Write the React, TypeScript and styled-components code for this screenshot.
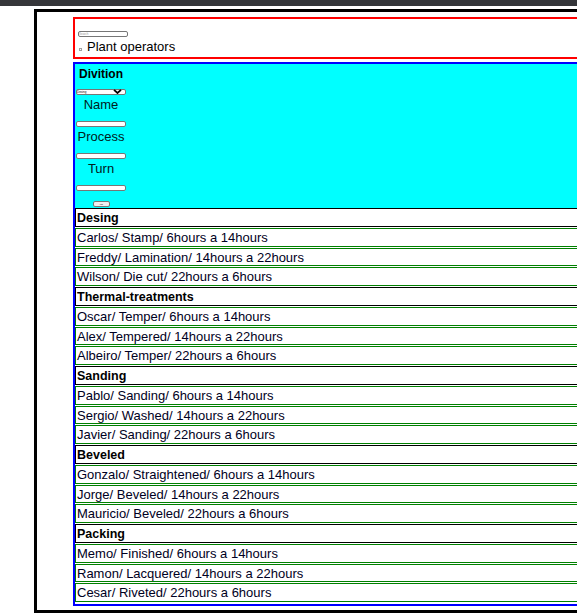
import React from "react";
import styled, { createGlobalStyle } from "styled-components";

const Global = createGlobalStyle`
  html, body {
    margin: 0;
    padding: 0;
    overflow: hidden;
    background: #ffffff;
    font-family: "Comic Sans MS", "Liberation Sans", Arial, sans-serif;
    color: #000;
  }
`;

const TopBar = styled.div`
  height: 6px;
  background: #35363a;
`;

const Frame = styled.div`
  margin: 3px 0 0 34px;
  width: 900px;
  border: 3px solid #000;
  padding: 5px 0 4px 36px;
`;

const Header = styled.div`
  border: 2px solid #ff0000;
  box-sizing: border-box;
  height: 42px;
  padding: 12px 0 0 3px;
  margin-bottom: 3px;
`;

const TinyInput = styled.input`
  display: block;
  box-sizing: border-box;
  width: 50px;
  height: 6px;
  padding: 0;
  margin: 0;
  border: 1px solid #767676;
  border-radius: 2px;
  background: #fff;
  font-size: 3px;
  outline: none;
  &::placeholder {
    color: #999;
  }
`;

const Title = styled.div`
  font-size: 13px;
  line-height: 17px;
  padding-top: 1px;
  display: flex;
  align-items: center;
`;

const Check = styled.span`
  display: inline-block;
  width: 3px;
  height: 3px;
  border: 1px solid #a0a0a0;
  box-sizing: border-box;
  margin: 5px 5px 0 1px;
`;

const Panel = styled.div`
  border: 2px solid #0000ff;
  background: #00ffff;
`;

const Form = styled.form`
  width: 50px;
  margin-left: 1px;
  display: flex;
  flex-direction: column;
  align-items: center;
  padding-bottom: 1px;
`;

const FormTitle = styled.div`
  font-weight: bold;
  font-size: 12px;
  line-height: 18px;
  padding-top: 1px;
  margin-bottom: 6px;
  white-space: nowrap;
`;

const SelectWrap = styled.div`
  position: relative;
  width: 50px;
  height: 6px;
`;

const TinySelect = styled.select`
  appearance: none;
  display: block;
  box-sizing: border-box;
  width: 50px;
  height: 6px;
  padding: 0;
  margin: 0;
  border: 1px solid #767676;
  border-radius: 2px;
  background: #fff;
  font-size: 3px;
`;

const Chevron = styled.svg`
  position: absolute;
  right: 4px;
  top: 0;
  pointer-events: none;
`;

const Label = styled.label`
  font-size: 13px;
  line-height: 18px;
  padding-top: 1px;
  margin-bottom: 7px;
  white-space: nowrap;
  color: #00201c;
`;

const Gap = styled.div`
  height: 10px;
`;

const TinyButton = styled.button`
  box-sizing: border-box;
  width: 17px;
  height: 6px;
  padding: 0;
  border: 1px solid #767676;
  border-radius: 2px;
  background: #efefef;
  font-size: 2px;
`;

const List = styled.div`
  background: #fff;
  padding-bottom: 1px;
`;

const Row = styled.div<{ $head?: boolean }>`
  border: 1px solid ${(p) => (p.$head ? "#000000" : "#008000")};
  padding: 2px 0 0 1px;
  margin-bottom: 1px;
  font-size: ${(p) => (p.$head ? "12.5px" : "13px")};
  font-weight: ${(p) => (p.$head ? "bold" : "normal")};
  line-height: 14.75px;
  white-space: nowrap;
  color: ${(p) => (p.$head ? "#000" : "#000022")};
`;

const groups: { name: string; items: string[] }[] = [
  {
    name: "Desing",
    items: [
      "Carlos/ Stamp/ 6hours a 14hours",
      "Freddy/ Lamination/ 14hours a 22hours",
      "Wilson/ Die cut/ 22hours a 6hours",
    ],
  },
  {
    name: "Thermal-treatments",
    items: [
      "Oscar/ Temper/ 6hours a 14hours",
      "Alex/ Tempered/ 14hours a 22hours",
      "Albeiro/ Temper/ 22hours a 6hours",
    ],
  },
  {
    name: "Sanding",
    items: [
      "Pablo/ Sanding/ 6hours a 14hours",
      "Sergio/ Washed/ 14hours a 22hours",
      "Javier/ Sanding/ 22hours a 6hours",
    ],
  },
  {
    name: "Beveled",
    items: [
      "Gonzalo/ Straightened/ 6hours a 14hours",
      "Jorge/ Beveled/ 14hours a 22hours",
      "Mauricio/ Beveled/ 22hours a 6hours",
    ],
  },
  {
    name: "Packing",
    items: [
      "Memo/ Finished/ 6hours a 14hours",
      "Ramon/ Lacquered/ 14hours a 22hours",
      "Cesar/ Riveted/ 22hours a 6hours",
    ],
  },
];

export default function App() {
  return (
    <>
      <Global />
      <TopBar />
      <Frame>
        <Header>
          <TinyInput placeholder="Search" />
          <Title>
            <Check />
            Plant operators
          </Title>
        </Header>
        <Panel>
          <Form onSubmit={(e) => e.preventDefault()}>
            <FormTitle>Divition</FormTitle>
            <SelectWrap>
              <TinySelect defaultValue="desing">
                <option value="desing">Desing</option>
                <option value="thermal">Thermal-treatments</option>
                <option value="sanding">Sanding</option>
                <option value="beveled">Beveled</option>
                <option value="packing">Packing</option>
              </TinySelect>
              <Chevron width="9" height="5" viewBox="0 0 9 5">
                <path d="M1 0.8 L4.5 4 L8 0.8" fill="none" stroke="#000" strokeWidth="1.8" />
              </Chevron>
            </SelectWrap>
            <Label>Name</Label>
            <TinyInput />
            <Label>Process</Label>
            <TinyInput />
            <Label>Turn</Label>
            <TinyInput />
            <Gap />
            <TinyButton type="submit">Add</TinyButton>
          </Form>
          <List>
            {groups.map((g) => (
              <React.Fragment key={g.name}>
                <Row $head>{g.name}</Row>
                {g.items.map((it) => (
                  <Row key={it}>{it}</Row>
                ))}
              </React.Fragment>
            ))}
          </List>
        </Panel>
      </Frame>
    </>
  );
}
